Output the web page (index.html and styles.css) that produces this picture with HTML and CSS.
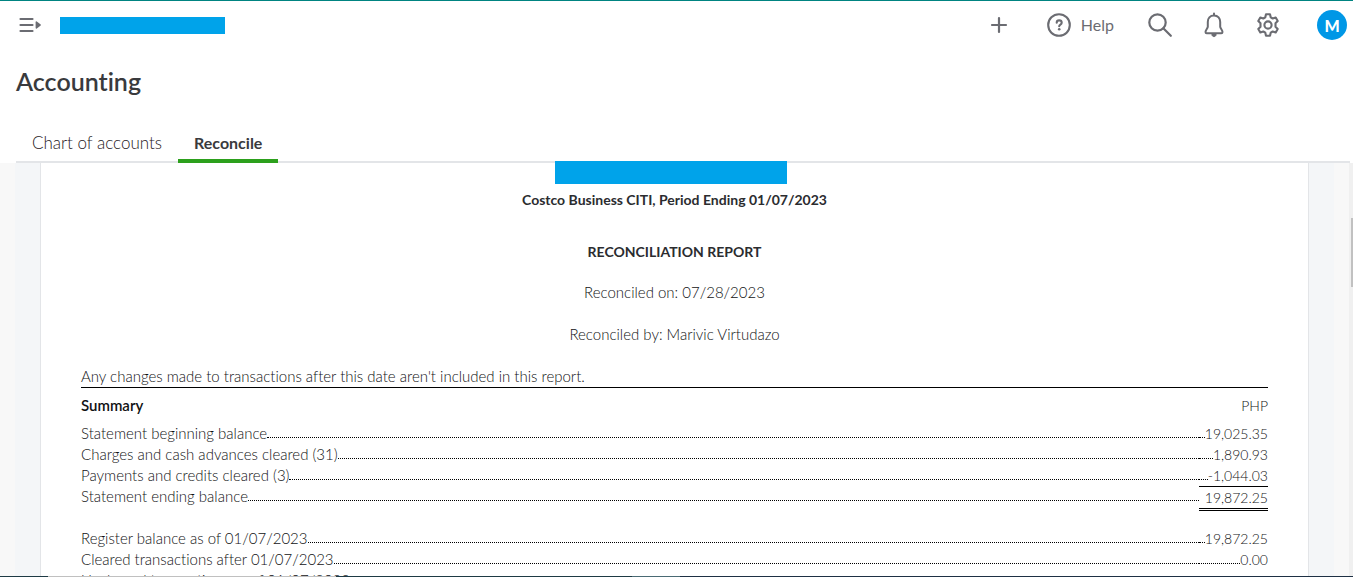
FILE: index.html
```html
<!DOCTYPE html>
<html lang="en">
<head>
    <meta charset="utf-8"/>
    <title>Accounting - Reconcile</title>
    <meta name="viewport" content="width=device-width,initial-scale=1">
    <link rel="stylesheet" href="styles.css">
</head>
<body>
<header class="topbar">
    <button class="icon-btn menu-btn" type="button" aria-label="Menu">
        <svg width="22" height="16" viewBox="0 0 22 16">
            <path d="M1.500 2h12M1.500 8h12M1.500 14h12" fill="none" stroke="#6b6c72" stroke-width="2.200" stroke-linecap="round"/>
            <path d="M17.800 4.600q-1.200-.8-1.200.8v5.200q0 1.600 1.200.8l3.600-2.700q.9-.7 0-1.400z" fill="#6b6c72"/>
        </svg>
    </button>
    <div class="company"></div>
    <nav class="tools">
        <button class="icon-btn" type="button" aria-label="New">
            <svg width="18" height="18" viewBox="0 0 18 18">
                <path d="M9 2v14M2 9h14" fill="none" stroke="#6b6c72" stroke-width="2.200" stroke-linecap="round"/>
            </svg>
        </button>
        <button class="icon-btn help-btn" type="button">
            <svg width="24" height="24" viewBox="0 0 24 24">
                <circle cx="12" cy="12" r="10.800" fill="none" stroke="#6b6c72" stroke-width="2.100"/>
                <path d="M9.700 9.800c0-3.200 5-3.200 5 0 0 1.800-2.500 1.800-2.500 3.400" fill="none" stroke="#6b6c72" stroke-width="2.100" stroke-linecap="round"/>
                <circle cx="12.200" cy="16.300" r="1.300" fill="#6b6c72"/>
            </svg>
            <span>Help</span>
        </button>
        <button class="icon-btn search-btn" type="button" aria-label="Search">
            <svg width="24" height="24" viewBox="0 0 24 24">
                <circle cx="9.500" cy="9.500" r="8.200" fill="none" stroke="#6b6c72" stroke-width="2.200"/>
                <path d="M15.300 15.300l7.500 7.500" fill="none" stroke="#6b6c72" stroke-width="2.200" stroke-linecap="round"/>
            </svg>
        </button>
        <button class="icon-btn" type="button" aria-label="Notifications">
            <svg width="24" height="26" viewBox="0 0 24 26">
                <path d="M12 1.500v2M12 3.500c-4 0-6.200 2.900-6.200 6.500v4.800c0 1.500-2.300 3.200-2.300 5.200 0 .9.400 1.200 1.200 1.200h14.600c.8 0 1.200-.3 1.200-1.200 0-2-2.300-3.700-2.300-5.200V10c0-3.600-2.200-6.500-6.200-6.500z" fill="none" stroke="#6b6c72" stroke-width="2" stroke-linecap="round" stroke-linejoin="round"/>
                <path d="M9.800 22.500c.3 2.800 4.100 2.800 4.400 0z" fill="#6b6c72" stroke="#6b6c72"/>
            </svg>
        </button>
        <button class="icon-btn" type="button" aria-label="Settings">
            <svg width="24" height="24" viewBox="0 0 24 24">
                <path d="M10 1.300h4l.7 3 2 1.200 3-.9 2 3.500-2.200 2.200v3.400l2.200 2.200-2 3.500-3-.9-2 1.200-.7 3h-4l-.7-3-2-1.200-3 .9-2-3.500 2.200-2.200v-3.400L2.300 8.100l2-3.500 3 .9 2-1.200z" fill="none" stroke="#6b6c72" stroke-width="2.100" stroke-linejoin="round"/>
                <circle cx="12" cy="12" r="3.600" fill="none" stroke="#6b6c72" stroke-width="2.100"/>
            </svg>
        </button>
        <button class="avatar" type="button">M</button>
    </nav>
</header>

<h1 class="page-title">Accounting</h1>

<nav class="tabs">
    <a class="tab" href="#">Chart of accounts</a>
    <a class="tab active" href="#">Reconcile</a>
</nav>

<div class="content">
    <div class="stage">
        <main class="report">
            <div class="client"><div class="client-name"></div></div>
            <h2 class="account">Costco Business CITI, Period Ending 01/07/2023</h2>
            <h2 class="report-title">RECONCILIATION REPORT</h2>
            <p class="meta">Reconciled on: 07/28/2023</p>
            <p class="meta">Reconciled by: Marivic Virtudazo</p>
            <p class="note">Any changes made to transactions after this date aren't included in this report.</p>
            <table class="summary">
                <thead>
                <tr>
                    <th class="name">Summary</th>
                    <th class="amount">PHP</th>
                </tr>
                </thead>
                <tbody>
                <tr>
                    <td class="name"><div class="line"><span>Statement beginning balance</span><i class="dots"></i></div></td>
                    <td class="amount"><div class="line"><i class="dots"></i><span>19,025.35</span></div></td>
                </tr>
                <tr>
                    <td class="name"><div class="line"><span>Charges and cash advances cleared (31)</span><i class="dots"></i></div></td>
                    <td class="amount"><div class="line"><i class="dots"></i><span>1,890.93</span></div></td>
                </tr>
                <tr>
                    <td class="name"><div class="line"><span>Payments and credits cleared (3)</span><i class="dots"></i></div></td>
                    <td class="amount"><div class="line"><i class="dots"></i><span>-1,044.03</span></div></td>
                </tr>
                <tr>
                    <td class="name"><div class="line"><span>Statement ending balance</span><i class="dots"></i></div></td>
                    <td class="amount"><div class="total">19,872.25</div></td>
                </tr>
                </tbody>
                <tbody class="register">
                <tr>
                    <td class="name"><div class="line"><span>Register balance as of 01/07/2023</span><i class="dots"></i></div></td>
                    <td class="amount"><div class="line"><i class="dots"></i><span>19,872.25</span></div></td>
                </tr>
                <tr>
                    <td class="name"><div class="line"><span>Cleared transactions after 01/07/2023</span><i class="dots"></i></div></td>
                    <td class="amount"><div class="line"><i class="dots"></i><span>0.00</span></div></td>
                </tr>
                <tr>
                    <td class="name"><div class="line"><span>Uncleared transactions as of 01/07/2023</span><i class="dots"></i></div></td>
                    <td class="amount"><div class="line"><i class="dots"></i><span>-1,281.95</span></div></td>
                </tr>
                </tbody>
            </table>
        </main>
    </div>
    <div class="scrollbar"><div class="thumb"></div></div>
</div>
<div class="bottom-edge"></div>
</body>
</html>
```

FILE: styles.css
```css
* {
    box-sizing: border-box;
}

body {
    margin: 0;
    height: 100vh;
    display: flex;
    flex-direction: column;
    overflow: hidden;
    border-top: 1px solid #008481;
    background: #fff;
    color: #393a3d;
    font-family: Lato, "Liberation Sans", sans-serif;
    font-size: 15px;
    font-weight: 300;
    font-variant-ligatures: none;
    line-height: 21px;
}

h1, h2, p {
    margin: 0;
}

/* top bar */
.topbar {
    flex: none;
    display: flex;
    align-items: center;
    height: 48px;
    padding: 0 6px 0 19px;
}

.icon-btn {
    display: flex;
    align-items: center;
    gap: 10px;
    padding: 0;
    border: 0;
    background: none;
    color: #6b6c72;
    font: inherit;
    font-size: 16px;
    font-weight: 400;
}

.help-btn span {
    padding-bottom: 2px;
}

.company {
    width: 165px;
    height: 17px;
    margin-left: 19px;
    background: #00a3ea;
}

.tools {
    display: flex;
    align-items: center;
    gap: 30px;
    margin-left: auto;
}

.help-btn {
    margin: 0 4px 0 9px;
}

.avatar {
    width: 30px;
    height: 30px;
    margin-left: 7px;
    padding: 0;
    border: 0;
    border-radius: 50%;
    background: #0097e6;
    color: #fff;
    font: inherit;
    font-weight: 900;
    font-size: 16px;
}

.page-title {
    flex: none;
    padding: 17px 16px 1px;
    font-size: 25px;
    font-weight: 600;
    line-height: 30px;
}

/* tabs */
.tabs {
    flex: none;
    display: flex;
    height: 66px;
    margin: 0 3px 0 16px;
    border-bottom: 2px solid #e3e5e8;
}

.tab {
    height: 66px;
    padding: 34px 16px 0;
    color: #1f2023;
    font-size: 17px;
    line-height: 24px;
    text-decoration: none;
}

.tab.active {
    border-bottom: 4px solid #2ca01c;
    border-radius: 2px 2px 0 0;
    color: #393a3d;
    font-size: 16px;
    font-weight: 700;
}

/* report */
.content {
    flex: 1;
    display: flex;
    min-height: 0;
    background: #f8f8f8;
}

.stage {
    flex: 1;
    margin: 0 15px;
    padding: 0 25px;
    background: #f4f6f8;
}

.report {
    display: flow-root;
    height: 100%;
    padding: 0 40px;
    border: 1px solid #e3e5e8;
    border-width: 0 1px;
    background: #fff;
    color: #111214;
    text-align: center;
}

.client {
    display: flex;
    justify-content: center;
    position: relative;
    margin: -2px 0 5px;
    padding-right: 8px;
}

.client-name {
    width: 232px;
    height: 23px;
    background: #00a3ea;
}

.account, .report-title {
    color: #2b2c2f;
    font-size: 14px;
    font-weight: 700;
    line-height: 21px;
}

.report-title {
    margin: 31px 0 20px;
}

.meta {
    margin-bottom: 21px;
}

.note {
    border-bottom: 1px solid #000;
    text-align: left;
}

.summary {
    width: 100%;
    border-collapse: collapse;
    table-layout: fixed;
}

.summary th, .summary td {
    padding: 0;
    vertical-align: top;
}

.summary th {
    height: 35px;
    padding-top: 7px;
    font-weight: 600;
}

.name {
    text-align: left;
}

.amount {
    width: 69px;
    font-size: 14px;
    text-align: right;
}

.summary th.amount {
    font-weight: 300;
}

.line {
    display: flex;
    align-items: flex-end;
    height: 21px;
    white-space: nowrap;
}

.dots {
    flex: 1;
    margin-bottom: 6px;
    border-bottom: 1px dotted #000;
}

.total {
    margin-bottom: 17px;
    border-top: 1px solid #000;
    border-bottom: 3px double #000;
}

/* scrollbar */
.scrollbar {
    width: 4px;
    padding: 55px 0 0 2px;
    background: #f0f0f0;
}

.thumb {
    height: 69px;
    background: #c1c1c1;
}

.bottom-edge {
    position: fixed;
    right: 0;
    bottom: 0;
    left: 0;
    height: 1px;
    background: linear-gradient(90deg, #1e3a44 48px, #c0c0c0 48px, #c0c0c0 336px, #1e3a44 336px, #1e3a44 632px, #4a6a74 632px, #4a6a74 680px, #1e3044 680px);
}
```
